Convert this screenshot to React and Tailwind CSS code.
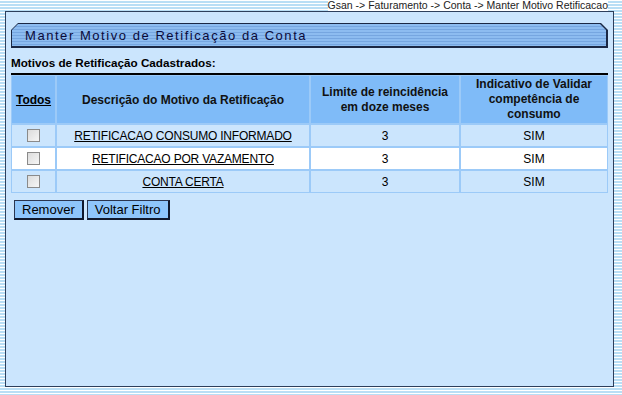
import React from 'react';

const ROWS = [
  { desc: 'RETIFICACAO CONSUMO INFORMADO', limite: '3', ind: 'SIM', bg: 'bg-[#cbe5fd]' },
  { desc: 'RETIFICACAO POR VAZAMENTO', limite: '3', ind: 'SIM', bg: 'bg-white' },
  { desc: 'CONTA CERTA', limite: '3', ind: 'SIM', bg: 'bg-[#cbe5fd]' },
];

const Checkbox = () => (
  <span className="inline-block w-[13px] h-[13px] border border-[#8a8a8a] bg-gradient-to-br from-[#dcdcdc] to-[#f6f6f6]" />
);

const Button = ({ children }) => (
  <button className="h-[20px] px-[7px] bg-[#8ec5fb] border border-[#2a3550] border-r-2 border-b-2 border-r-[#10182c] border-b-[#10182c] text-[13px] leading-none text-black">
    {children}
  </button>
);

export default function App() {
  return (
    <div className="min-h-[395px] w-[622px] bg-[repeating-linear-gradient(to_bottom,#ffffff_0px,#ffffff_1px,#b9def5_1px,#b9def5_3px)] font-['Liberation_Sans',Arial,sans-serif] text-black">
      {/* Breadcrumb */}
      <div className="h-[11px] pr-[14px] flex justify-end items-center text-[10.5px] leading-none text-[#222]">
        <span className="bg-white">Gsan -&gt; Faturamento -&gt; Conta -&gt; Manter Motivo Retificacao</span>
      </div>

      {/* Main panel */}
      <div className="ml-[5px] w-[609px] h-[376px] border border-[#2d3f5c] bg-[#cbe5fd] px-[5px] pt-[11px]">
        {/* Title bar */}
        <div className="w-[597px] h-[25px] bg-[#1b2844] pt-[1px] pl-[1px] pr-[2px] pb-[2px] [clip-path:polygon(7px_0,calc(100%-7px)_0,100%_7px,100%_100%,0_100%,0_7px)]">
          <div className="h-full flex items-center pl-[13px] bg-[repeating-linear-gradient(to_bottom,#8dbcf0_0px,#8dbcf0_2px,#76a6e0_2px,#76a6e0_3px)] [clip-path:polygon(6px_0,calc(100%-6px)_0,100%_6px,100%_100%,0_100%,0_6px)]">
            <span className="text-[13px] tracking-[1.55px] text-[#0a0a3a] leading-none pt-[1px]">
              Manter Motivo de Retificação da Conta
            </span>
          </div>
        </div>

        <div className="mt-[8px] text-[11.7px] font-bold leading-[13px] text-black">
          Motivos de Retificação Cadastrados:
        </div>

        <div className="mt-[4px] w-[597px] h-[2px] bg-black" />

        {/* Table */}
        <div className="w-[597px] grid grid-cols-[43px_252px_148px_1fr] gap-[2px] p-[1px] bg-[#9ccaf8] text-[12px]">
          <div className="h-[47px] bg-[#7fbbf8] flex items-center justify-center font-bold underline">Todos</div>
          <div className="bg-[#7fbbf8] flex items-center justify-center font-bold text-[#111]">
            Descrição do Motivo da Retificação
          </div>
          <div className="bg-[#7fbbf8] flex items-center justify-center text-center font-bold leading-[15px] text-[#111]">
            Limite de reincidência<br />em doze meses
          </div>
          <div className="bg-[#7fbbf8] flex items-center justify-center text-center font-bold leading-[15px] text-[#111]">
            Indicativo de Validar<br />competência de<br />consumo
          </div>

          {ROWS.map((r) => (
            <React.Fragment key={r.desc}>
              <div className={`h-[21px] ${r.bg} flex items-center justify-center`}>
                <Checkbox />
              </div>
              <div className={`${r.bg} flex items-center justify-center underline tracking-[-0.2px]`}>{r.desc}</div>
              <div className={`${r.bg} flex items-center justify-center`}>{r.limite}</div>
              <div className={`${r.bg} flex items-center justify-center`}>{r.ind}</div>
            </React.Fragment>
          ))}
        </div>

        <div className="mt-[7px] pl-[3px] flex gap-[3px]">
          <Button>Remover</Button>
          <Button>Voltar Filtro</Button>
        </div>
      </div>
    </div>
  );
}
